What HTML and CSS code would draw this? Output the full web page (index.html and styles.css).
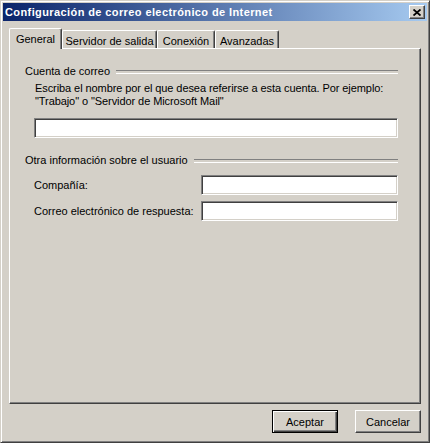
FILE: index.html
```html
<!DOCTYPE html>
<html lang="es">
<head>
<meta charset="utf-8">
<title>Configuración de correo electrónico de Internet</title>
<link rel="stylesheet" href="styles.css">
</head>
<body>
<div class="window">
  <div class="titlebar">
    <span class="title">Configuración de correo electrónico de Internet</span>
    <button class="close" aria-label="Cerrar">
      <svg width="8" height="7" viewBox="0 0 8 7"><path d="M0.5 0.5 L7.5 6.5 M7.5 0.5 L0.5 6.5" stroke="#000" stroke-width="1.8" fill="none"/></svg>
    </button>
  </div>
  <div class="tabs">
    <div class="tab tab-general selected">General</div>
    <div class="tab tab-servidor">Servidor de salida</div>
    <div class="tab tab-conexion">Conexión</div>
    <div class="tab tab-avanzadas">Avanzadas</div>
  </div>
  <div class="panel">
    <div class="group-title">Cuenta de correo</div>
    <div class="desc">Escriba el nombre por el que desea referirse a esta cuenta. Por ejemplo:<br>"Trabajo" o "Servidor de Microsoft Mail"</div>
    <input class="field field-wide" type="text">
    <div class="group-title group-second">Otra información sobre el usuario</div>
    <div class="row row-first">
      <span class="label">Compañía:</span>
      <input class="field field-short" type="text">
    </div>
    <div class="row">
      <span class="label">Correo electrónico de respuesta:</span>
      <input class="field field-short" type="text">
    </div>
  </div>
  <div class="buttons">
    <button class="btn btn-default">Aceptar</button>
    <button class="btn">Cancelar</button>
  </div>
</div>
</body>
</html>
```
FILE: styles.css
```css
* { box-sizing: border-box; }
html, body { margin: 0; padding: 0; }
body {
  width: 430px;
  height: 443px;
  background: #D4D0C8;
  font-family: "Liberation Sans", Arial, sans-serif;
  font-size: 11px;
  color: #000;
  overflow: hidden;
}
.window {
  width: 430px;
  height: 443px;
  display: flex;
  flex-direction: column;
  background: #D4D0C8;
  border: 1px solid;
  border-color: #D4D0C8 #404040 #404040 #D4D0C8;
  box-shadow: inset 1px 1px #fff, inset -1px -1px #808080;
  padding: 2px;
}
.titlebar {
  height: 18px;
  flex: none;
  display: flex;
  align-items: center;
  padding-left: 2px;
  background: linear-gradient(to right, #0A246A, #A6CAF0);
  color: #fff;
  font-weight: bold;
  font-size: 11px;
}
.title { flex: 1; white-space: nowrap; line-height: 13px; letter-spacing: 0.4px; }
.close {
  width: 16px;
  height: 14px;
  margin-right: 2px;
  padding: 0;
  display: flex;
  align-items: center;
  justify-content: center;
  background: #D4D0C8;
  border: 1px solid;
  border-color: #fff #404040 #404040 #fff;
  box-shadow: inset -1px -1px #808080;
}
.close svg { display: block; }
.tabs {
  flex: none;
  height: 20px;
  margin: 7px 6px 0;
  display: flex;
  align-items: flex-end;
}
.tab {
  height: 18px;
  padding-top: 4px;
  line-height: 13px;
  text-align: center;
  white-space: nowrap;
  background: #D4D0C8;
  border-top: 1px solid #fff;
  border-left: 1px solid #fff;
  border-right: 1px solid #404040;
  box-shadow: inset -1px 0 #808080;
  border-radius: 2px 2px 0 0;
}
.tab.selected {
  height: 21px;
  margin-bottom: -1px;
  position: relative;
  z-index: 1;
}
.tab-general { width: 53px; }
.tab-servidor { width: 95px; }
.tab-conexion { width: 58px; }
.tab-avanzadas { width: 64px; }
.panel {
  flex: 1;
  margin: 0 6px;
  border: 1px solid;
  border-color: #fff #404040 #404040 #fff;
  box-shadow: inset -1px -1px #808080;
  padding: 16px 22px 0 15px;
}
.group-title {
  display: flex;
  align-items: center;
  height: 13px;
  line-height: 13px;
  white-space: nowrap;
}
.group-title::after {
  content: "";
  flex: 1;
  height: 2px;
  margin-left: 6px;
  border-top: 1px solid #808080;
  border-bottom: 1px solid #fff;
}
.group-second { margin-top: 16px; }
.desc {
  margin: 4px 0 0 10px;
  line-height: 13px;
  white-space: nowrap;
  letter-spacing: -0.08px;
}
.field {
  display: block;
  height: 20px;
  padding: 0;
  margin: 0;
  background: #fff;
  border: 1px solid;
  border-color: #808080 #fff #fff #808080;
  box-shadow: inset 1px 1px #404040, inset -1px -1px #D4D0C8;
  font: inherit;
  outline: none;
}
.field-wide {
  width: calc(100% - 9px);
  margin: 10px 0 0 9px;
}
.row {
  display: flex;
  align-items: center;
  height: 20px;
  margin-top: 6px;
  padding-left: 9px;
}
.row-first { margin-top: 8px; }
.label { white-space: nowrap; line-height: 13px; }
.field-short { width: 197px; margin-left: auto; }
.buttons {
  flex: none;
  height: 23px;
  margin: 6px 6px 7px 0;
  display: flex;
  justify-content: flex-end;
  gap: 17px;
}
.btn {
  width: 66px;
  height: 23px;
  padding: 0;
  font: inherit;
  color: #000;
  background: #D4D0C8;
  border: 1px solid;
  border-color: #fff #404040 #404040 #fff;
  box-shadow: inset -1px -1px #808080;
}
.btn-default {
  border-color: #000;
  box-shadow: inset 1px 1px #fff, inset -1px -1px #404040, inset -2px -2px #808080;
}
```
